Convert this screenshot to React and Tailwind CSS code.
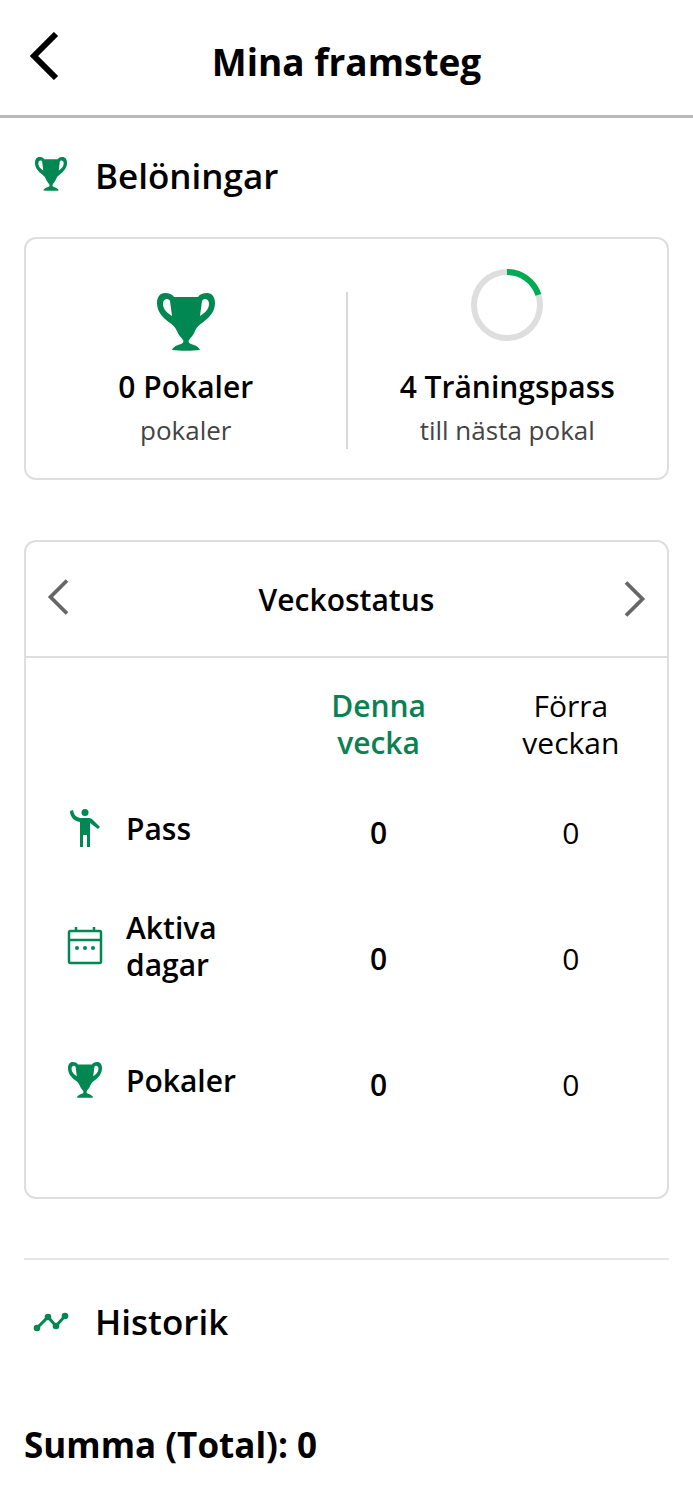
const rows = [
  { label: "Pass", icon: <PersonIcon />, current: 0, previous: 0 },
  { label: "Aktiva dagar", icon: <CalendarIcon />, current: 0, previous: 0 },
  { label: "Pokaler", icon: <TrophyIcon className="h-9 w-[34px]" />, current: 0, previous: 0 },
];

export default function App() {
  return (
    <div className="min-h-screen bg-white font-['Open_Sans',sans-serif] text-black">
      <header className="grid h-[118px] grid-cols-[88px_1fr_88px] items-center border-b-3 border-[#b9b9b9]">
        <button type="button" aria-label="Tillbaka" className="flex h-20 items-center pb-1 pl-7">
          <Chevron className="h-12 w-8" strokeWidth={6} />
        </button>
        <h1 className="pt-2 text-center text-[37px] leading-[52px] font-bold">Mina framsteg</h1>
      </header>

      <main className="px-6">
        <SectionHeading icon={<TrophyIcon className="mb-1 h-[34px] w-8" />} title="Belöningar" />

        <section className="mt-[35px] grid h-[243px] grid-cols-[1fr_2px_1fr] rounded-xl border-2 border-[#dedede]">
          <Reward icon={<TrophyIcon className="mt-6 h-[58px] w-[58px]" />} title="0 Pokaler" text="pokaler" />
          <div className="mt-[53px] mb-[29px] bg-[#d8d8d8]" />
          <Reward icon={<ProgressRing value={0.2} />} title="4 Träningspass" text="till nästa pokal" />
        </section>

        <section className="mt-[60px] h-[659px] rounded-xl border-2 border-[#dedede]">
          <div className="flex h-[116px] items-center justify-between border-b-2 border-[#dedede] px-5">
            <button type="button" aria-label="Föregående vecka" className="pb-1">
              <Chevron className="h-9 w-6 text-[#666]" strokeWidth={5} />
            </button>
            <h2 className="text-[30px] leading-[37px] font-semibold">Veckostatus</h2>
            <button type="button" aria-label="Nästa vecka">
              <Chevron className="h-9 w-6 rotate-180 text-[#666]" strokeWidth={5} />
            </button>
          </div>

          <table className="w-full table-fixed text-[30px] leading-[37px]">
            <thead>
              <tr className="h-[111px] align-bottom">
                <th className="w-2/5" aria-label="Aktivitet" />
                <th scope="col" className="px-8 pb-2 font-semibold text-[#0b8152]">Denna vecka</th>
                <th scope="col" className="px-8 pb-2 font-normal">Förra veckan</th>
              </tr>
            </thead>
            <tbody>
              {rows.map((row) => (
                <StatusRow key={row.label} {...row} />
              ))}
            </tbody>
          </table>
        </section>

        <hr className="mt-[59px] mb-1 border-t-2 border-[#e6e6e6]" />

        <SectionHeading icon={<TrendIcon />} title="Historik" />
        <p className="mt-[71px] text-[35px] leading-[52px] font-bold">Summa (Total): 0</p>
      </main>
    </div>
  );
}

function SectionHeading({ icon, title }) {
  return (
    <div className="flex items-center pt-8">
      <div className="flex w-[71px] justify-center pr-[18px]">{icon}</div>
      <h2 className="text-[35px] leading-[52px] font-semibold">{title}</h2>
    </div>
  );
}

function Reward({ icon, title, text }) {
  return (
    <div className="flex flex-col items-center pt-[30px] text-center">
      <div className="flex h-[99px] items-start">{icon}</div>
      <h3 className="text-[30px] leading-[37px] font-semibold">{title}</h3>
      <p className="mt-[7px] text-[26px] leading-[37px] text-[#444]">{text}</p>
    </div>
  );
}

function StatusRow({ label, icon, current, previous }) {
  // two-line labels sit a little higher so that the first line leads the row
  const offset = label.includes(" ") ? "pb-6" : "pb-2";

  return (
    <tr className="h-[126px]">
      <th scope="row" className={`${offset} pl-[41px] text-left font-semibold`}>
        <div className="flex items-center gap-[23px]">
          <span className="flex w-9 shrink-0 justify-center">{icon}</span>
          <span>{label}</span>
        </div>
      </th>
      <td className="text-center font-semibold">{current}</td>
      <td className="text-center">{previous}</td>
    </tr>
  );
}

function ProgressRing({ value }) {
  const length = 2 * Math.PI * 33;

  return (
    <svg viewBox="0 0 72 72" className="size-[72px] -rotate-90" fill="none" strokeWidth="6">
      <circle cx="36" cy="36" r="33" stroke="#dedede" />
      <circle cx="36" cy="36" r="33" stroke="#00ab55" strokeDasharray={`${length * value} ${length}`} />
    </svg>
  );
}

function Chevron({ className, strokeWidth }) {
  return (
    <svg viewBox="0 0 32 48" className={className} fill="none" stroke="currentColor" strokeWidth={strokeWidth}>
      <path d="M28 2 6 24l22 22" />
    </svg>
  );
}

function TrophyIcon({ className }) {
  return (
    <svg viewBox="0 0 58 58" preserveAspectRatio="none" className={className} fill="#008752" fillRule="evenodd">
      <path d="M17 4h24c2-3 5-4 9-4 5 0 8 4 8 10 0 9-6 15-13 20-4 3-5 4-7 8-2 5-4 6-6 9-1 2 0 3 2 4 4 1 8 3 9 6-8 1-20 1-28 0 1-3 5-5 9-6 2-1 3-2 2-4-2-3-4-4-6-9-2-4-3-5-7-8C6 25 0 19 0 10 0 4 3 0 8 0c4 0 7 1 9 4ZM13 8c-1-3-7-3-7 3 0 5 4 9 9 12Zm32 0-2 15c5-3 9-7 9-12 0-6-6-6-7-3Z" />
    </svg>
  );
}

function PersonIcon() {
  return (
    <svg viewBox="0 0 32 40" className="h-10 w-8" fill="#008752">
      <circle cx="16" cy="4.5" r="3.5" />
      <path d="m1 3 3-1c1 6 4 8 9 8h7c2 0 3 1 4 2l7 7-2 2-8-6v24h-3V27h-4v12h-3V14C5 13 1 9 1 3Z" />
    </svg>
  );
}

function CalendarIcon() {
  return (
    <svg viewBox="0 0 36 40" className="h-10 w-9 shrink-0" fill="none" stroke="#008752" strokeWidth="2.5">
      <rect x="2" y="5" width="32" height="32" rx="1.5" />
      <path d="M2 14h32M9 1v4M27 1v4" />
      <g fill="#008752" stroke="none">
        <circle cx="10" cy="22" r="2" />
        <circle cx="18" cy="22" r="2" />
        <circle cx="26" cy="22" r="2" />
      </g>
    </svg>
  );
}

function TrendIcon() {
  return (
    <svg viewBox="0 0 36 20" className="h-5 w-9 shrink-0" fill="#008752">
      <path d="M4 16 15 5l8 9L32 4" fill="none" stroke="#008752" strokeWidth="3" />
      <circle cx="4" cy="16" r="3.3" />
      <circle cx="15" cy="5" r="3.3" />
      <circle cx="23" cy="14" r="3.3" />
      <circle cx="32" cy="4" r="3.3" />
    </svg>
  );
}
